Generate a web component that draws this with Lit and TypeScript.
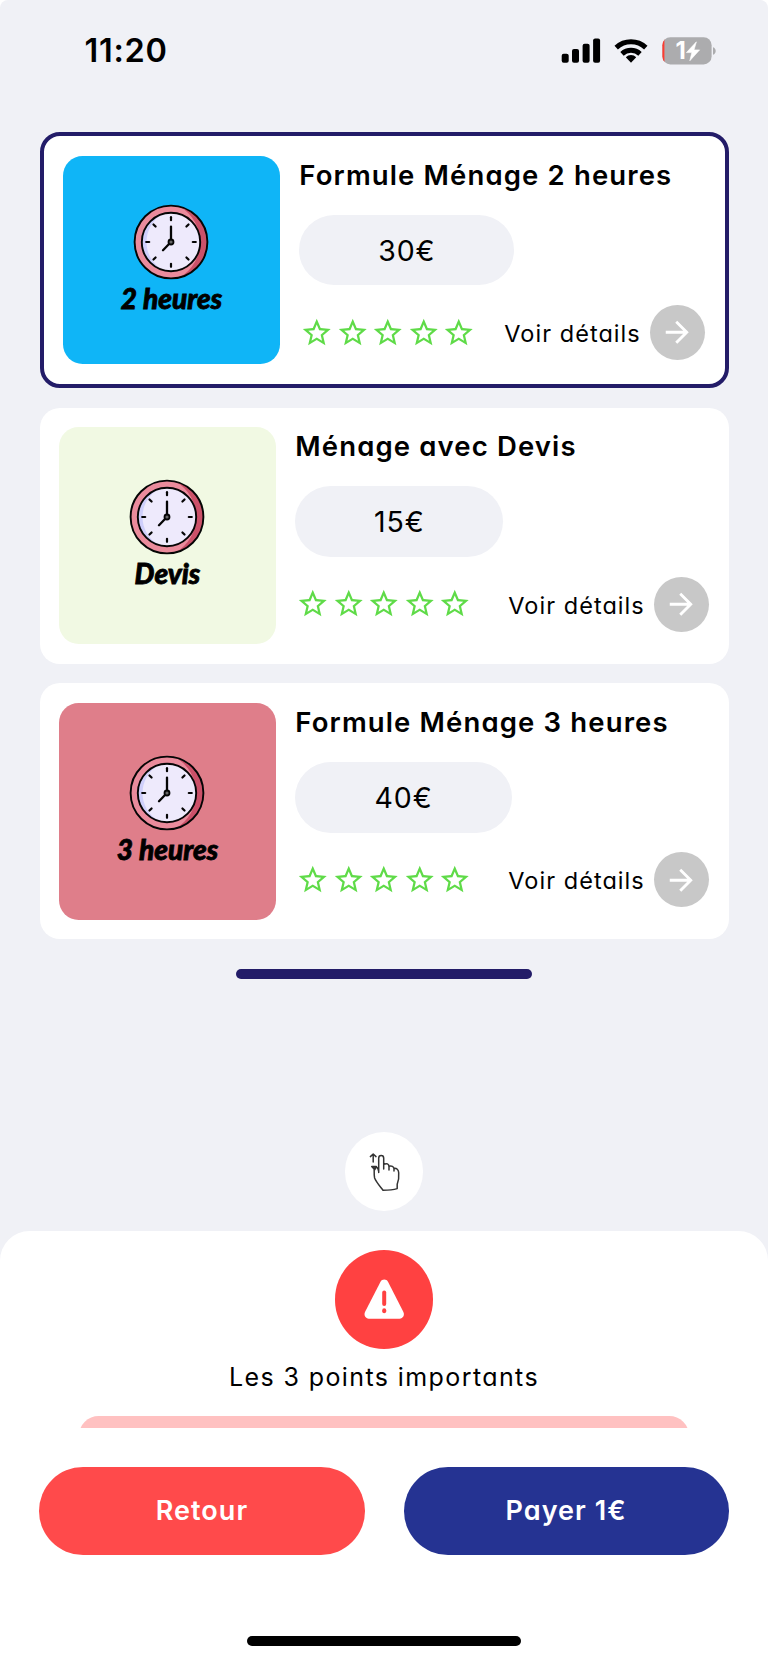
import { LitElement, html, css, svg } from "lit";
import { customElement, property } from "lit/decorators.js";

const STAR =
  "M22 9.24l-7.19-.62L12 2 9.19 8.63 2 9.24l5.46 4.73L5.82 21 12 17.27 18.18 21l-1.63-7.03L22 9.24zM12 15.4l-3.76 2.27 1-4.28-3.32-2.88 4.38-.38L12 6.1l1.71 4.04 4.38.38-3.32 2.88 1 4.28L12 15.4z";

@customElement("status-bar")
class StatusBar extends LitElement {
  static styles = css`
    :host {
      display: flex;
      justify-content: space-between;
      align-items: flex-start;
      height: 132px;
      box-sizing: border-box;
      padding: 32px 50px 0 84.5px;
    }
    .time {
      font: 600 32.5px/38px Inter, sans-serif;
      letter-spacing: 0.7px;
      color: #000;
    }
    .icons {
      display: block;
      width: 158px;
      height: 36px;
    }
    .level {
      font: 700 24px Inter, sans-serif;
      fill: #fff;
    }
  `;
  render() {
    return html`
      <span class="time">11:20</span>
      <svg class="icons" viewBox="560 32 158 36">
        <rect x="561.7" y="53.8" width="7" height="9" rx="2" />
        <rect x="572" y="49" width="7" height="13.8" rx="2" />
        <rect x="582.6" y="43.8" width="7" height="19" rx="2" />
        <rect x="593.1" y="38.4" width="7" height="24.4" rx="2" />
        <g fill="none" stroke="#000" stroke-width="5">
          <path d="M616.2 47.6a21.8 21.8 0 0 1 29.6 0" />
          <path d="M622 53.8a13.4 13.4 0 0 1 18 0" />
        </g>
        <path d="M631 62.8l-5.2-5.6a7.4 7.4 0 0 1 10.4 0z" />
        <clipPath id="cell"><rect x="662.4" y="37.2" width="49.2" height="27.2" rx="8" /></clipPath>
        <g clip-path="url(#cell)">
          <rect x="662" y="37" width="50" height="28" fill="#acacae" />
          <rect x="662" y="37" width="2.4" height="28" fill="#ff3b30" />
        </g>
        <path d="M713 47.2c3.6 1.2 3.6 6.2 0 7.6z" fill="#acacae" />
        <text class="level" x="675.6" y="59.4">1</text>
        <path d="M696.4 41.8l-10 10.8h5.4l-2 8.200 9.800-10.900h-5.600z" fill="#fff" stroke="#fff" stroke-width=".6" stroke-linejoin="round" />
      </svg>
    `;
  }
}

@customElement("wall-clock")
class WallClock extends LitElement {
  static styles = css`
    :host,
    svg {
      display: block;
      width: 76px;
      height: 76px;
    }
  `;
  render() {
    const ticks = [0, 45, 90, 135, 180, 225, 270, 315];
    return html`
      <svg viewBox="-38 -38 76 76">
        <circle r="36.4" fill="#ea8b9c" />
        <path d="M9 -35.3A36.4 36.4 0 0 1 9 35.3A41 41 0 0 0 9 -35.3z" fill="#cb5169" />
        <circle r="29" fill="#cfcffb" />
        <path d="M-8 -28A29 29 0 1 1 -8 28C-30 16 -30 -16 -8 -28z" fill="#eeeafc" />
        <g fill="none" stroke="#050505" stroke-width="1.9" stroke-linecap="round">
          <circle r="36.4" />
          <circle r="29.2" />
          ${ticks.map(
            (a) => svg`<path d="M0 -24.8V-21.8" stroke-width="2.2" transform="rotate(${a})" />`
          )}
          <path d="M0 -2V-15.4M-2 2L-8 8.2" stroke-width="2.3" />
          <circle r="2.5" fill="#666" stroke-width="1.8" />
        </g>
      </svg>
    `;
  }
}

@customElement("offer-card")
class OfferCard extends LitElement {
  @property() title = "";
  @property() price = "";
  @property() label = "";
  @property() tint = "";
  @property({ type: Number }) pill = 208;
  @property({ type: Boolean, reflect: true }) selected = false;

  static styles = css`
    :host {
      display: flex;
      gap: 19.7px;
      box-sizing: border-box;
      height: 256px;
      padding: 19.7px;
      border-radius: 20px;
      background: #fff;
      font-family: Inter, sans-serif;
      font-feature-settings: "cv11";
      color: #000;
    }
    :host([selected]) {
      border: 4px solid #231c68;
    }
    .thumb {
      flex: none;
      display: flex;
      flex-direction: column;
      align-items: center;
      justify-content: center;
      width: 216.4px;
      border-radius: 19.7px;
    }
    .caption {
      font: italic 900 28px/37px Lato, sans-serif;
      white-space: nowrap;
      -webkit-text-stroke: 0.8px #000;
    }
    .info {
      flex: 1;
      min-width: 0;
    }
    h2 {
      margin: 0;
      height: 59px;
      font-size: 27.5px;
      font-weight: 600;
      line-height: 39px;
      letter-spacing: 1.14px;
      white-space: nowrap;
    }
    .pill {
      display: flex;
      align-items: center;
      justify-content: center;
      height: 70.7px;
      border-radius: 36px;
      background: #f0f1f6;
      font-size: 28.5px;
      letter-spacing: 0.9px;
    }
    .row {
      display: flex;
      align-items: center;
      margin-top: 19.7px;
      height: 55px;
    }
    .stars {
      display: flex;
      gap: 1.95px;
      margin-left: 1px;
    }
    .star {
      width: 33.5px;
      height: 33.5px;
      fill: #5fdb48;
    }
    .more {
      margin-left: auto;
      margin-right: 9px;
      padding-top: 2px;
      font-size: 23.5px;
      letter-spacing: 1.05px;
      white-space: nowrap;
    }
    .go {
      display: flex;
      align-items: center;
      justify-content: center;
      width: 55px;
      height: 55px;
      border-radius: 50%;
      background: #c8c8c8;
    }
    .arrow {
      width: 34.5px;
      height: 34.5px;
      fill: #fff;
    }
  `;
  render() {
    return html`
      <div class="thumb" style="background:${this.tint}">
        <wall-clock></wall-clock>
        <span class="caption">${this.label}</span>
      </div>
      <div class="info">
        <h2>${this.title}</h2>
        <div class="pill" style="width:${this.pill}px">${this.price}</div>
        <div class="row">
          <div class="stars">
            ${[1, 2, 3, 4, 5].map(
              () => html`<svg class="star" viewBox="0 0 24 24"><path d=${STAR} /></svg>`
            )}
          </div>
          <span class="more">Voir détails</span>
          <span class="go">
            <svg class="arrow" viewBox="0 0 24 24">
              <path d="M12 4l-1.41 1.41L16.17 11H4v2h12.17l-5.58 5.59L12 20l8-8z" />
            </svg>
          </span>
        </div>
      </div>
    `;
  }
}

@customElement("app-root")
class AppRoot extends LitElement {
  static styles = css`
    :host {
      display: flex;
      flex-direction: column;
      height: 1662px;
      border-radius: 8px 8px 0 0;
      background: #f0f1f6;
      overflow: hidden;
      font-family: Inter, sans-serif;
      font-feature-settings: "cv11";
      color: #000;
    }
    .list {
      display: flex;
      flex-direction: column;
      gap: 19.6px;
      padding: 0 39.5px;
    }
    .bar {
      align-self: center;
      width: 295.4px;
      height: 10px;
      margin-top: 29.5px;
      border-radius: 5px;
      background: #231c68;
    }
    .hand {
      align-self: center;
      display: flex;
      width: 78.8px;
      height: 78.8px;
      margin-top: 153.2px;
      border-radius: 50%;
      background: #fff;
    }
    .sheet {
      flex: 1;
      display: flex;
      flex-direction: column;
      align-items: center;
      margin-top: 20px;
      border-radius: 29.5px 29.5px 0 0;
      background: #fff;
    }
    .warn {
      width: 98.5px;
      height: 98.5px;
      margin-top: 19.5px;
      border-radius: 50%;
      background: #ff4141;
    }
    .points {
      margin-top: 10px;
      font-size: 25px;
      line-height: 36px;
      letter-spacing: 1.4px;
    }
    .notice {
      width: 610px;
      height: 12px;
      margin-top: 21px;
      overflow: hidden;
    }
    .notice-body {
      height: 60px;
      border-radius: 19.7px;
      background: #ffc1c1;
    }
    .actions {
      display: flex;
      gap: 39px;
      align-self: stretch;
      padding: 0 39.4px;
      margin-top: 39px;
    }
    .btn {
      flex: 1;
      height: 88.6px;
      padding: 0;
      border: 0;
      border-radius: 44.3px;
      background: #ff4a4b;
      color: #fff;
      font: 600 27px Inter, sans-serif;
      font-feature-settings: "cv11";
      letter-spacing: 1.05px;
    }
    .pay {
      background: #253392;
    }
    .home {
      width: 273.5px;
      height: 10px;
      margin-top: 80.5px;
      border-radius: 5px;
      background: #000;
    }
  `;
  render() {
    return html`
      <status-bar></status-bar>
      <div class="list">
        <offer-card selected title="Formule Ménage 2 heures" price="30€" label="2 heures" tint="#0fb5f7" .pill=${215}></offer-card>
        <offer-card title="Ménage avec Devis" price="15€" label="Devis" tint="#f1f9e3" .pill=${208}></offer-card>
        <offer-card title="Formule Ménage 3 heures" price="40€" label="3 heures" tint="#df7e8a" .pill=${216.5}></offer-card>
      </div>
      <div class="bar"></div>
      <div class="hand">
        <svg viewBox="344.6 1132 78.8 78.8" width="78.8" height="78.8" fill="none" stroke="#333" stroke-width="1.5" stroke-linejoin="round" stroke-linecap="round">
          <path d="M372.8 1162V1154.6M370 1156.6l2.8-2.6 2.8 2.6" />
          <path d="M378.3 1172.5V1158.2c0-3.6 5-3.6 5 0V1169M383.3 1164.4c3-1.6 5.2-.4 5.3 2.2V1170M388.6 1166.2c2.6-.8 4.800.3 5 2.6V1171M393.6 1168.4c2.6-.4 4.6 1.4 4.7 4.4.4 4.4-.3 8.4-1.5 11.4v4.4c-4.6 1.4-9 1.6-14.2 1.6-3.4-4.4-6.6-7.800-8.4-12.200-.8-3.6-.2-8.2-.5-11.600M371.300 1166.500h4.600l-1.500 3.200zM375.600 1166.500c1.600 1 2.500 2.600 2.700 5" />
        </svg>
      </div>
      <div class="sheet">
        <div class="warn">
          <svg viewBox="334.8 1250.3 98.5 98.5" width="98.5" height="98.5">
            <path d="M380.2 1282.3c1.7-3.2 6-3.2 7.7 0l15.3 30c1.500 3-.5 6.700-3.800 6.700h-30.800c-3.300 0-5.300-3.700-3.800-6.700z" fill="#fff" />
            <path d="M384 1292.7v11.600" stroke="#ff4141" stroke-width="4" stroke-linecap="round" />
            <rect x="382" y="1308.5" width="4" height="5" rx="2" fill="#ff4141" />
          </svg>
        </div>
        <div class="points">Les 3 points importants</div>
        <div class="notice"><div class="notice-body"></div></div>
        <div class="actions">
          <button class="btn">Retour</button>
          <button class="btn pay">Payer 1€</button>
        </div>
        <div class="home"></div>
      </div>
    `;
  }
}
